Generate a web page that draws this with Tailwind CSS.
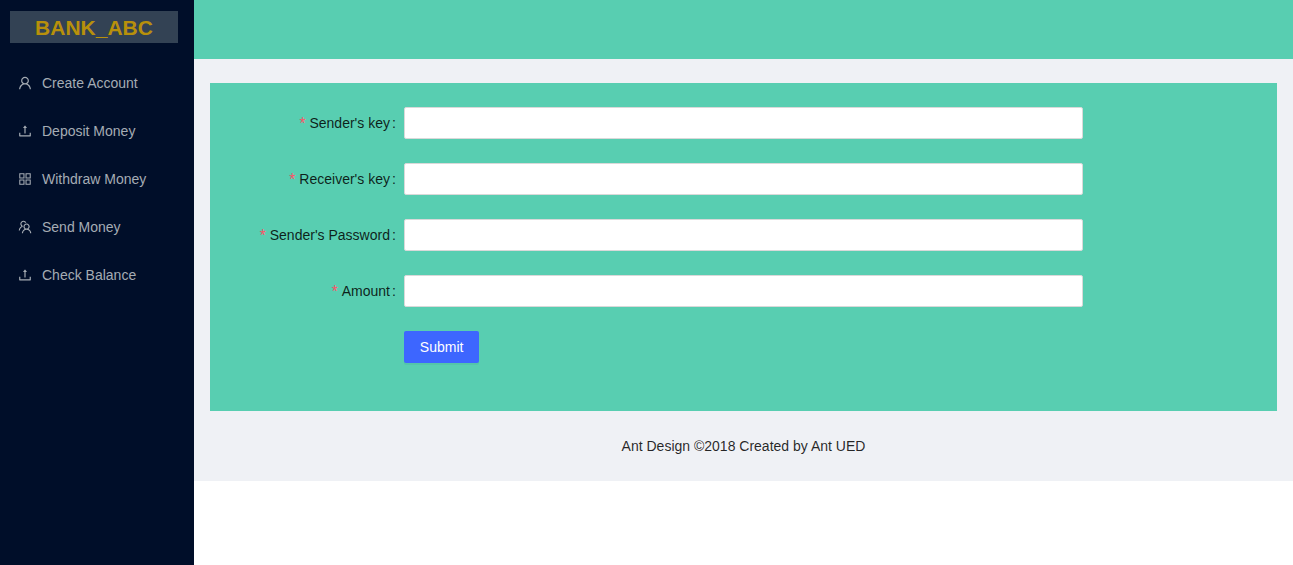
<!DOCTYPE html>
<html lang="en">
<head>
<meta charset="utf-8">
<meta name="viewport" content="width=device-width, initial-scale=1">
<title>BANK_ABC</title>
<script src="https://cdn.jsdelivr.net/npm/@tailwindcss/browser@4"></script>
</head>
<body class="flex min-h-screen bg-white font-['Liberation_Sans',Arial,sans-serif] text-sm leading-[22px] text-black/85">

<svg class="hidden" aria-hidden="true">
  <symbol id="user" viewBox="64 64 896 896"><path d="M858.5 763.6a374 374 0 00-80.6-119.5 375.63 375.63 0 00-119.5-80.6c-.4-.2-.8-.3-1.2-.5C719.5 518 760 444.7 760 362c0-137-111-248-248-248S264 225 264 362c0 82.7 40.5 156 102.8 201.1-.4.2-.8.3-1.2.5-44.8 18.9-85 46-119.5 80.6a375.63 375.63 0 00-80.6 119.5A371.7 371.7 0 00136 901.8a8 8 0 008 8.2h60c4.4 0 7.9-3.5 8-7.8 2-77.2 33-149.5 87.8-204.3 56.7-56.7 132-87.9 212.2-87.9s155.5 31.2 212.2 87.9C779 752.7 810 825 812 902.2c.1 4.4 3.6 7.8 8 7.8h60a8 8 0 008-8.2c-1-47.8-10.9-94.3-29.5-138.2zM512 534c-45.9 0-89.1-17.9-121.6-50.4S340 407.9 340 362c0-45.9 17.9-89.1 50.4-121.6S466.1 190 512 190s89.1 17.9 121.6 50.4S684 316.1 684 362c0 45.9-17.9 89.1-50.4 121.6S557.9 534 512 534z"/></symbol>
  <symbol id="upload" viewBox="64 64 896 896"><path d="M400 317.7h73.9V656c0 4.4 3.6 8 8 8h60c4.4 0 8-3.6 8-8V317.7H624c6.7 0 10.4-7.7 6.3-12.9L518.3 163a8 8 0 00-12.6 0l-112 141.7c-4.1 5.3-.4 13 6.3 13zM878 626h-60c-4.4 0-8 3.6-8 8v154H214V634c0-4.4-3.6-8-8-8h-60c-4.4 0-8 3.6-8 8v198c0 17.7 14.3 32 32 32h684c17.7 0 32-14.3 32-32V634c0-4.4-3.6-8-8-8z"/></symbol>
  <symbol id="appstore" viewBox="64 64 896 896"><path d="M464 144H160c-8.8 0-16 7.2-16 16v304c0 8.8 7.2 16 16 16h304c8.8 0 16-7.2 16-16V160c0-8.8-7.2-16-16-16zm-52 268H212V212h200v200zm452-268H560c-8.8 0-16 7.2-16 16v304c0 8.8 7.2 16 16 16h304c8.8 0 16-7.2 16-16V160c0-8.8-7.2-16-16-16zm-52 268H612V212h200v200zM464 544H160c-8.8 0-16 7.2-16 16v304c0 8.8 7.2 16 16 16h304c8.8 0 16-7.2 16-16V560c0-8.8-7.2-16-16-16zm-52 268H212V612h200v200zm452-268H560c-8.8 0-16 7.2-16 16v304c0 8.8 7.2 16 16 16h304c8.8 0 16-7.2 16-16V560c0-8.8-7.2-16-16-16zm-52 268H612V612h200v200z"/></symbol>
  <symbol id="team" viewBox="64 64 896 896"><path d="M824.2 699.9a301.55 301.55 0 00-86.4-60.4C783.1 602.8 812 546.8 812 484c0-110.8-92.4-201.7-203.2-200-109.1 1.7-197 90.6-197 200 0 62.8 29 118.8 74.2 155.5a300.95 300.95 0 00-86.4 60.4C345 754.6 314 826.8 312 903.8a8 8 0 008 8.2h56c4.3 0 7.9-3.4 8-7.7 1.9-58 25.4-112.3 66.7-153.5A226.62 226.62 0 01612 684c60.9 0 118.2 23.7 161.3 66.8C814.6 792 838 846.3 840 904.3c.1 4.3 3.7 7.7 8 7.7h56a8 8 0 008-8.2c-2-77-33-149.2-87.8-203.9zM612 612c-34.2 0-66.4-13.3-90.5-37.5a126.86 126.86 0 01-37.5-91.8c.3-32.8 13.4-64.5 36.3-88 24-24.6 56.1-38.3 90.4-38.7 33.9-.3 66.8 12.9 91 36.6 24.8 24.3 38.4 56.8 38.4 91.4 0 34.2-13.3 66.3-37.5 90.5A127.3 127.3 0 01612 612zM361.5 510.4c-.9-8.7-1.4-17.5-1.4-26.4 0-15.9 1.5-31.4 4.3-46.5.7-3.6-1.2-7.3-4.5-8.8-13.6-6.1-26.1-14.5-36.9-25.1a127.54 127.54 0 01-38.7-95.4c.9-32.1 13.8-62.6 36.3-85.6 24.7-25.3 57.9-39.1 93.2-38.7 31.9.3 62.7 12.6 86 34.4 7.9 7.4 14.7 15.6 20.4 24.4 2 3.1 5.9 4.4 9.3 3.2 17.6-6.1 36.2-10.4 55.3-12.4 5.6-.6 8.8-6.6 6.3-11.6-32.5-64.3-98.9-108.7-175.7-109.9-110.9-1.7-203.3 89.2-203.3 199.9 0 62.8 28.9 118.8 74.2 155.5-31.8 14.7-61.1 35-86.5 60.4-54.8 54.7-85.8 126.9-87.8 204a8 8 0 008 8.2h56.1c4.3 0 7.9-3.4 8-7.7 1.9-58 25.4-112.3 66.7-153.5 29.4-29.4 65.4-49.8 104.7-59.7 3.9-1 6.5-4.7 6-8.7z"/></symbol>
</svg>

<aside class="w-[194px] shrink-0 bg-[#000e29] pt-[11px]">
  <div class="mr-4 ml-[10px] h-8 bg-[#334254] text-center text-[21px] leading-[34px] font-bold text-[#b8900b]">BANK_ABC</div>
  <nav class="mt-5 flex flex-col gap-2 text-[#a5acb4]">
    <a href="#create" class="flex h-10 items-center gap-[10px] pl-[18px]"><svg class="size-[14px] fill-current" aria-hidden="true"><use href="#user"/></svg>Create Account</a>
    <a href="#deposit" class="flex h-10 items-center gap-[10px] pl-[18px]"><svg class="size-[14px] fill-current" aria-hidden="true"><use href="#upload"/></svg>Deposit Money</a>
    <a href="#withdraw" class="flex h-10 items-center gap-[10px] pl-[18px]"><svg class="size-[14px] fill-current" aria-hidden="true"><use href="#appstore"/></svg>Withdraw Money</a>
    <a href="#send" class="flex h-10 items-center gap-[10px] pl-[18px]"><svg class="size-[14px] fill-current" aria-hidden="true"><use href="#team"/></svg>Send Money</a>
    <a href="#balance" class="flex h-10 items-center gap-[10px] pl-[18px]"><svg class="size-[14px] fill-current" aria-hidden="true"><use href="#upload"/></svg>Check Balance</a>
  </nav>
</aside>

<div class="min-w-0 flex-1 self-start bg-[#eff1f5]">
  <header class="h-[59px] bg-[#58ceb1]"></header>
  <main class="mx-4 mt-6 bg-[#58ceb1] p-6">
    <form class="flex flex-col gap-6 pb-6">
      <div class="grid grid-cols-[4fr_16fr_4fr] items-center">
        <label for="sender" class="pr-2 text-right whitespace-nowrap"><span class="mr-1 font-[Roboto,sans-serif] leading-none text-[#f5586a]">*</span>Sender's key<span class="ml-[2px]">:</span></label>
        <input id="sender" type="text" required class="h-8 w-full min-w-0 rounded-xs border border-[#d9d9d9] bg-white px-[11px] shadow-none outline-none">
      </div>
      <div class="grid grid-cols-[4fr_16fr_4fr] items-center">
        <label for="receiver" class="pr-2 text-right whitespace-nowrap"><span class="mr-1 font-[Roboto,sans-serif] leading-none text-[#f5586a]">*</span>Receiver's key<span class="ml-[2px]">:</span></label>
        <input id="receiver" type="text" required class="h-8 w-full min-w-0 rounded-xs border border-[#d9d9d9] bg-white px-[11px] shadow-none outline-none">
      </div>
      <div class="grid grid-cols-[4fr_16fr_4fr] items-center">
        <label for="password" class="pr-2 text-right whitespace-nowrap"><span class="mr-1 font-[Roboto,sans-serif] leading-none text-[#f5586a]">*</span>Sender's Password<span class="ml-[2px]">:</span></label>
        <input id="password" type="password" required class="h-8 w-full min-w-0 rounded-xs border border-[#d9d9d9] bg-white px-[11px] shadow-none outline-none">
      </div>
      <div class="grid grid-cols-[4fr_16fr_4fr] items-center">
        <label for="amount" class="pr-2 text-right whitespace-nowrap"><span class="mr-1 font-[Roboto,sans-serif] leading-none text-[#f5586a]">*</span>Amount<span class="ml-[2px]">:</span></label>
        <input id="amount" type="text" required class="h-8 w-full min-w-0 rounded-xs border border-[#d9d9d9] bg-white px-[11px] shadow-none outline-none">
      </div>
      <div class="grid grid-cols-[4fr_16fr_4fr]">
        <button type="submit" class="col-start-2 h-8 justify-self-start rounded-xs bg-[#3d66ff] px-4 text-white shadow-[0_2px_0_rgba(0,0,0,0.045)]">Submit</button>
      </div>
    </form>
  </main>
  <footer class="p-6 text-center">Ant Design ©2018 Created by Ant UED</footer>
</div>
</body>
</html>
